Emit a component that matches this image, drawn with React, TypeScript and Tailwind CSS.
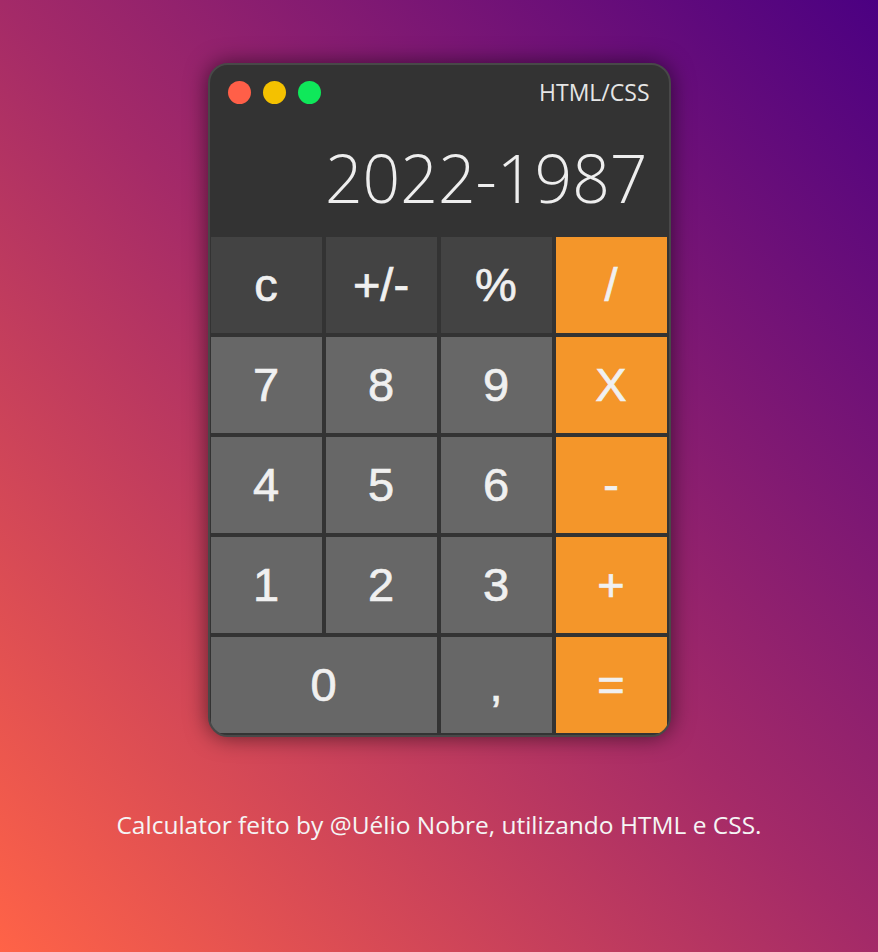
import React from "react";

type Key = { label: string; kind: "fn" | "num" | "op"; span?: boolean };

const keys: Key[] = [
  { label: "c", kind: "fn" },
  { label: "+/-", kind: "fn" },
  { label: "%", kind: "fn" },
  { label: "/", kind: "op" },
  { label: "7", kind: "num" },
  { label: "8", kind: "num" },
  { label: "9", kind: "num" },
  { label: "X", kind: "op" },
  { label: "4", kind: "num" },
  { label: "5", kind: "num" },
  { label: "6", kind: "num" },
  { label: "-", kind: "op" },
  { label: "1", kind: "num" },
  { label: "2", kind: "num" },
  { label: "3", kind: "num" },
  { label: "+", kind: "op" },
  { label: "0", kind: "num", span: true },
  { label: ",", kind: "num" },
  { label: "=", kind: "op" },
];

export default function App() {
  return (
    <div className="w-full min-h-[952px] bg-[linear-gradient(to_top_right,#ff6347,#a42a68,#4b0082)] flex flex-col items-center pt-[63px]">
      <div className="w-[463px] h-[674px] rounded-[20px] border-2 border-[#484848] bg-[#333333] overflow-hidden shadow-[0_0_22px_rgba(0,0,0,0.55)] flex flex-col">
        <div className="flex flex-col justify-between pl-[18px] pr-[18px] pt-[12px] pb-[20px] h-[172px]">
          <div className="flex w-full items-center justify-between">
            <div className="flex items-center gap-[12px] mt-[1px]">
              <span className="block w-[23px] h-[23px] rounded-full bg-[#ff5f48]" />
              <span className="block w-[23px] h-[23px] rounded-full bg-[#f4c100]" />
              <span className="block w-[23px] h-[23px] rounded-full bg-[#0fe85a]" />
            </div>
            <span className="text-[23px] leading-[30px] text-[#e6e6e6] font-['Open_Sans',sans-serif] mr-[1px]">
              HTML/CSS
            </span>
          </div>
          <div className="w-full text-right text-[66px] leading-[80px] pr-[3px] font-light text-[#eeeeee] font-['Open_Sans',sans-serif]">
            2022-1987
          </div>
        </div>
        <div className="grid grid-cols-[repeat(4,111px)] auto-rows-[96px] gap-[4px] pl-[1px]">
          {keys.map((k, i) => (
            <div
              key={i}
              className={
                "flex items-center justify-center text-[47px] text-[#f0f0f0] [-webkit-text-stroke:0.7px_#f0f0f0] font-['Liberation_Sans',Arial,sans-serif] " +
                (k.kind === "fn"
                  ? "bg-[#434343]"
                  : k.kind === "num"
                  ? "bg-[#676767]"
                  : "bg-[#f4962a]") +
                (k.span ? " col-span-2" : "")
              }
            >
              {k.label}
            </div>
          ))}
        </div>
      </div>
      <p className="mt-[70px] text-[24.5px] text-[#f5f5f5] font-['Open_Sans',sans-serif]">
        Calculator feito by @Uélio Nobre, utilizando HTML e CSS.
      </p>
    </div>
  );
}
